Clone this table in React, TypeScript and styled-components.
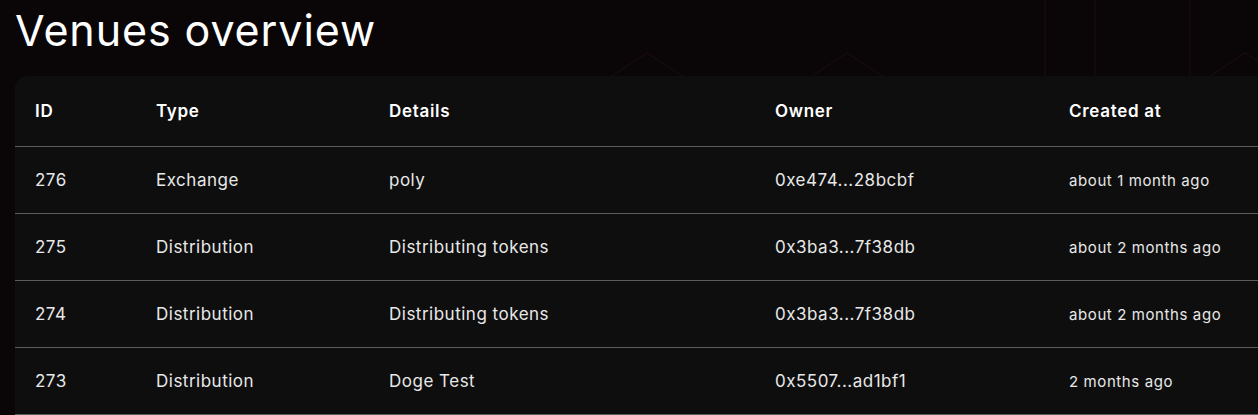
import styled, { createGlobalStyle } from 'styled-components';

type Venue = {
  id: number;
  type: string;
  details: string;
  owner: string;
  created: string;
};

const venues: Venue[] = [
  { id: 276, type: 'Exchange', details: 'poly', owner: '0xe474...28bcbf', created: 'about 1 month ago' },
  { id: 275, type: 'Distribution', details: 'Distributing tokens', owner: '0x3ba3...7f38db', created: 'about 2 months ago' },
  { id: 274, type: 'Distribution', details: 'Distributing tokens', owner: '0x3ba3...7f38db', created: 'about 2 months ago' },
  { id: 273, type: 'Distribution', details: 'Doge Test', owner: '0x5507...ad1bf1', created: '2 months ago' },
];

const GlobalStyle = createGlobalStyle`
  body {
    margin: 0;
    background: #0a0608;
    overflow: hidden;
    font-family: Inter, 'Noto Sans', sans-serif;
  }
`;

// faint hexagon lines behind the page
const HexBackdrop = () => (
  <BackdropSvg width="1258" height="415" viewBox="0 0 1258 415">
    <g fill="none" stroke="#1f0b11" strokeWidth="1">
      <polyline points="560,110 647,53 734,110" />
      <polyline points="760,110 847,53 934,110" />
      <polyline points="1158,110 1245,53 1332,110" />
      <line x1="1045" y1="0" x2="1045" y2="76" />
      <line x1="1095" y1="0" x2="1095" y2="76" />
      <line x1="1190" y1="0" x2="1190" y2="76" />
    </g>
  </BackdropSvg>
);

const App = () => {
  return (
    <>
      <GlobalStyle />
      <Page>
        <HexBackdrop />
        <Title>Venues overview</Title>
        <Card>
          <Table>
            <colgroup>
              <col style={{ width: 121 }} />
              <col style={{ width: 233 }} />
              <col style={{ width: 386 }} />
              <col style={{ width: 294 }} />
              <col />
            </colgroup>
            <thead>
              <tr>
                <HeadCell>ID</HeadCell>
                <HeadCell>Type</HeadCell>
                <HeadCell>Details</HeadCell>
                <HeadCell>Owner</HeadCell>
                <HeadCell>Created at</HeadCell>
              </tr>
            </thead>
            <tbody>
              {venues.map((v) => (
                <tr key={v.id}>
                  <Cell>{v.id}</Cell>
                  <Cell>{v.type}</Cell>
                  <Cell>{v.details}</Cell>
                  <Cell>{v.owner}</Cell>
                  <Cell small>{v.created}</Cell>
                </tr>
              ))}
            </tbody>
          </Table>
        </Card>
      </Page>
    </>
  );
};

export default App;

const Page = styled.div`
  position: relative;
  width: 1258px;
  height: 415px;
  padding-left: 15px;
  box-sizing: border-box;
  overflow: hidden;
`;

const BackdropSvg = styled.svg`
  position: absolute;
  top: 0;
  left: 0;
  pointer-events: none;
`;

const Title = styled.h1`
  position: relative;
  margin: 0;
  height: 76px;
  padding-top: 4px;
  box-sizing: border-box;
  font-size: 43px;
  font-weight: 400;
  line-height: 52px;
  color: #ffffff;
  letter-spacing: 0.9px;
`;

const Card = styled.div`
  position: relative;
  width: 1263px;
  background: #0e0e0e;
  border-radius: 12px 12px 0 0;
`;

const Table = styled.table`
  width: 100%;
  border-collapse: collapse;
  table-layout: fixed;
`;

const HeadCell = styled.th`
  height: 70px;
  padding: 0 0 0 20px;
  text-align: left;
  font-size: 17px;
  font-weight: 600;
  color: #ffffff;
  letter-spacing: 0.7px;
  border-bottom: 1px solid #5c5c5c;
`;

const Cell = styled.td<{ small?: boolean }>`
  height: 66px;
  padding: 0 0 0 20px;
  font-size: ${(p) => (p.small ? '15px' : '17px')};
  letter-spacing: ${(p) => (p.small ? '0.6px' : '0.5px')};
  font-weight: 400;
  color: #e8e8e8;
  border-bottom: 1px solid #5c5c5c;
  white-space: nowrap;
`;
